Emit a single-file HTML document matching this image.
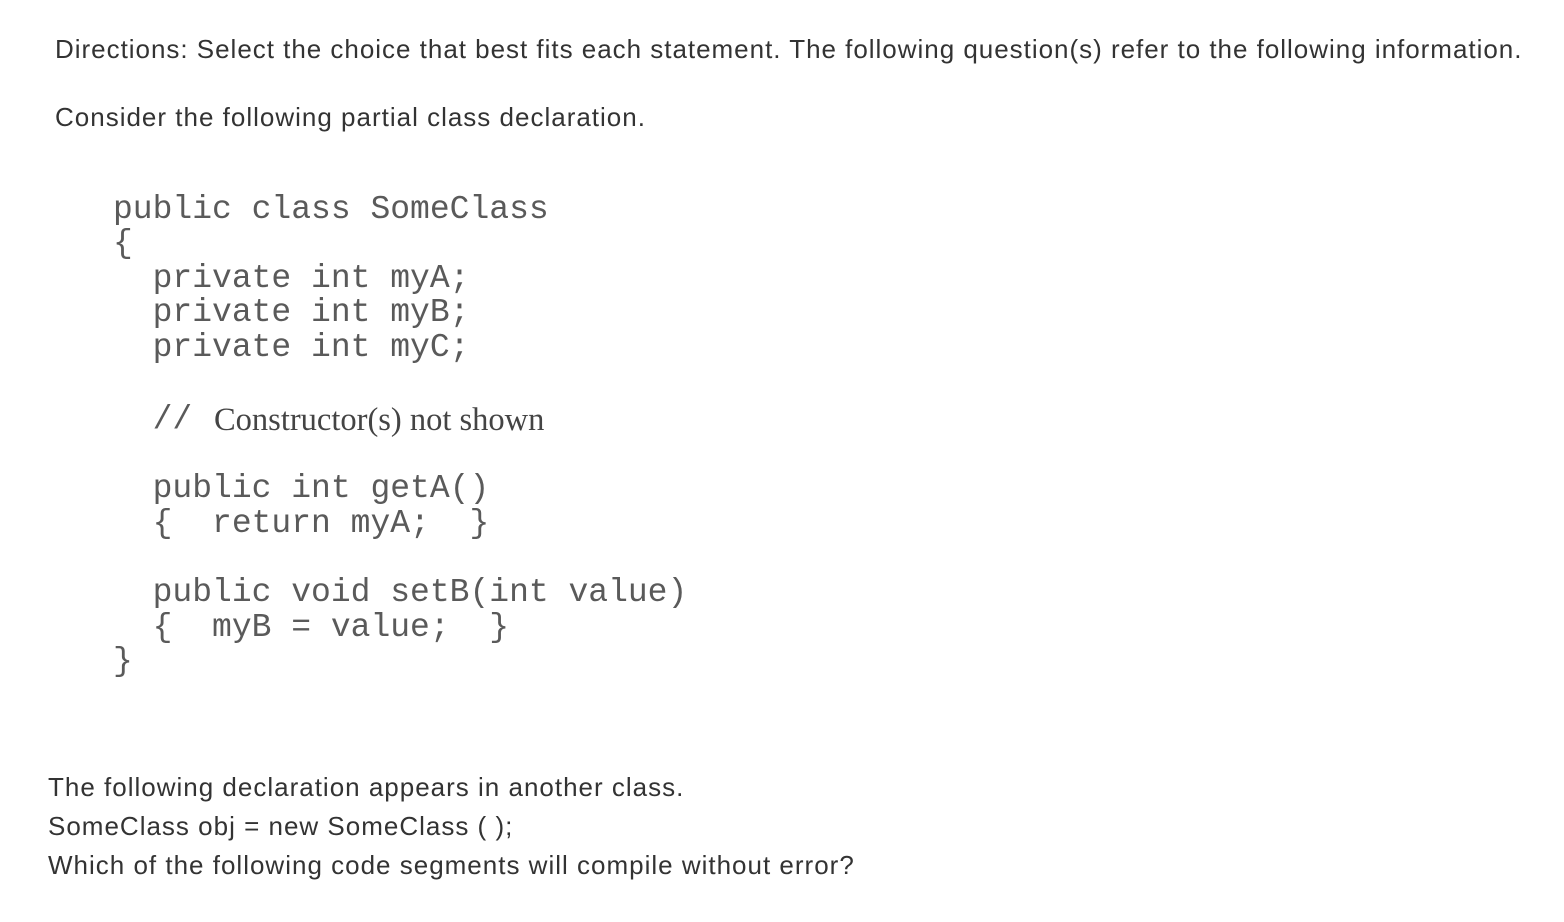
<!DOCTYPE html>
<html><head><style>
body{margin:0;width:1564px;height:922px;background:#fff;position:relative;overflow:hidden}
.t{position:absolute;font-family:"Liberation Sans",sans-serif;font-size:26px;color:#333;white-space:pre;line-height:30px;letter-spacing:1px}
.c{position:absolute;font-family:"Liberation Mono",monospace;font-size:33px;color:#5a5a5a;white-space:pre;line-height:34px}
.s{position:absolute;font-family:"Liberation Serif",serif;font-size:32.5px;color:#444;white-space:pre;line-height:34px}
</style></head><body>
<div class="t" style="left:55px;top:34px;letter-spacing:0.98px">Directions: Select the choice that best fits each statement. The following question(s) refer to the following information.</div>
<div class="t" style="left:55px;top:102px">Consider the following partial class declaration.</div>
<div class="c" style="left:113px;top:193px">public class SomeClass</div>
<div class="c" style="left:113px;top:227px">{</div>
<div class="c" style="left:113px;top:262px">  private int myA;</div>
<div class="c" style="left:113px;top:296px">  private int myB;</div>
<div class="c" style="left:113px;top:331px">  private int myC;</div>
<div class="c" style="left:113px;top:403px">  //</div>
<div class="s" style="left:214px;top:403px">Constructor(s) not shown</div>
<div class="c" style="left:113px;top:472px">  public int getA()</div>
<div class="c" style="left:113px;top:507px">  {  return myA;  }</div>
<div class="c" style="left:113px;top:576px">  public void setB(int value)</div>
<div class="c" style="left:113px;top:611px">  {  myB = value;  }</div>
<div class="c" style="left:113px;top:645px">}</div>
<div class="t" style="left:48px;top:772px">The following declaration appears in another class.</div>
<div class="t" style="left:48px;top:811px">SomeClass obj = new SomeClass ( );</div>
<div class="t" style="left:48px;top:850px">Which of the following code segments will compile without error?</div>
</body></html>
